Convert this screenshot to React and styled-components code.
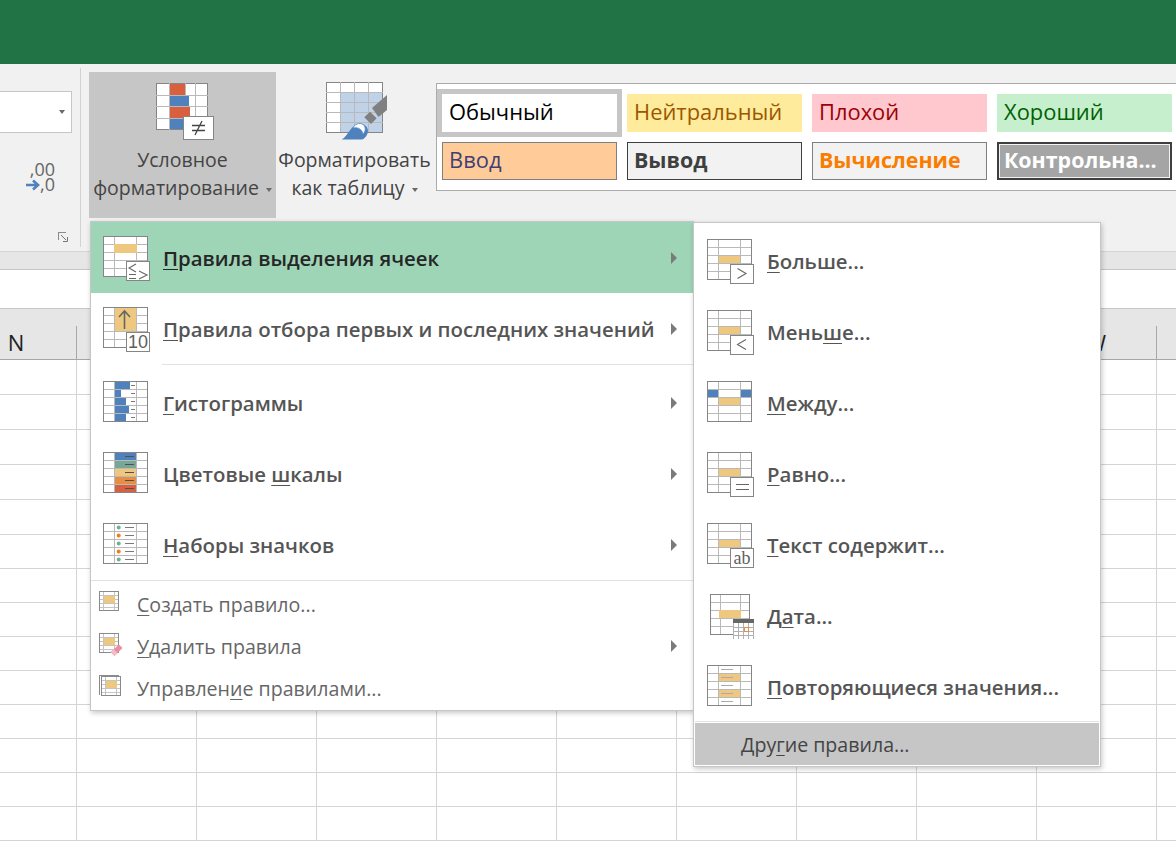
import React from 'react'
import styled, { createGlobalStyle } from 'styled-components'

const FONT = `"Open Sans", "Noto Sans", "Liberation Sans", sans-serif`
const ORANGE = '#edc87e'
const BLUE = '#4f81bd'
const RED = '#d9603f'
const EDGE = '#858585'
const LINE = '#b9b9b9'

const Global = createGlobalStyle`
  html, body { margin: 0; padding: 0; background: #fff; overflow: hidden; }
  #root { width: 1176px; height: 847px; overflow: hidden; }
  * { box-sizing: border-box; }
`

const Page = styled.div`
  position: relative;
  width: 1176px;
  height: 847px;
  overflow: hidden;
  font-family: ${FONT};
`
const TitleBar = styled.div`
  height: 64px;
  background: #217346;
`
const Ribbon = styled.div`
  display: flex;
  align-items: flex-start;
  height: 188px;
  background: #f1f1f1;
  border-bottom: 1px solid #d4d4d4;
`
const NumberGroup = styled.div`
  display: flex;
  flex-direction: column;
  align-items: flex-end;
  width: 81px;
  height: 179px;
  margin-top: 4px;
  padding: 23px 8px 4px 0;
  border-right: 1px solid #d2d2d2;
`
const Combo = styled.div`
  display: flex;
  align-items: center;
  justify-content: flex-end;
  width: 72px;
  height: 42px;
  padding-right: 6px;
  background: #fff;
  border: 1px solid #c6c6c6;
  border-left: 0;
`
const Caret = styled.span`
  display: inline-block;
  width: 0;
  height: 0;
  margin-left: ${p => p.$gap || 0}px;
  vertical-align: middle;
  border-left: 3.5px solid transparent;
  border-right: 3.5px solid transparent;
  border-top: 4px solid #6a6a6a;
`
const DecimalStep = styled.div`
  display: flex;
  flex-direction: column;
  align-items: flex-end;
  margin: 29px 17px 0 0;
  font-size: 18px;
  line-height: 15px;
  color: #666;
`
const DecimalLine = styled.div`
  display: flex;
  align-items: center;
`
const Launcher = styled.svg`
  display: block;
  margin-top: auto;
  margin-right: 3px;
`
const RibbonButton = styled.div`
  display: flex;
  flex-direction: column;
  align-items: center;
  flex: none;
  width: ${p => p.$w}px;
  height: 146px;
  margin: 8px 0 0 ${p => p.$ml}px;
  padding-top: ${p => p.$pt}px;
  background: ${p => (p.$active ? '#c6c6c6' : 'transparent')};
  color: #444;
  font-size: 19.5px;
  line-height: 28px;
  text-align: center;
  white-space: nowrap;
`
const ButtonIcon = styled.svg`
  display: block;
  flex: none;
  margin-left: ${p => p.$ml}px;
`
const ButtonLabel = styled.div`
  margin-top: ${p => p.$mt}px;
`
const Gallery = styled.div`
  display: grid;
  grid-template-columns: repeat(4, 175px);
  grid-auto-rows: 38px;
  gap: 10px;
  flex: 1;
  height: 108px;
  margin: 19px 0 0 3px;
  padding: 10px 0 0 5px;
  background: #fff;
  border: 1px solid #ababab;
  border-right: 0;
`
const StyleCell = styled.div`
  display: flex;
  align-items: center;
  padding: 0 0 3px ${p => p.$pl}px;
  font-size: ${p => (p.$bold ? 21.4 : 21.9)}px;
  font-weight: ${p => (p.$bold ? 700 : 400)};
  white-space: nowrap;
  color: ${p => p.$fg};
  background: ${p => p.$bg};
  border: ${p => p.$border || 'none'};
  ${p => p.$selected && 'box-shadow: 0 0 0 5px #c6c6c6;'}
  ${p => p.$double && 'outline: 1px solid #f2f2f2; outline-offset: -3px;'}
`
const Strip = styled.div`
  height: 18px;
  background: #e6e6e6;
  border-bottom: 1px solid #c6c6c6;
`
const FormulaBar = styled.div`
  height: 39px;
  background: #fff;
  border-bottom: 1px solid #c6c6c6;
`
const HeaderRow = styled.div`
  display: flex;
  height: 51px;
  margin-left: -43px;
  background: #e6e6e6;
  border-bottom: 1px solid #a6a6a6;
`
const HeaderCell = styled.div`
  flex: none;
  position: relative;
  width: 120px;
  padding: 17px 2px 0 0;
  font-size: 22px;
  line-height: 32px;
  text-align: center;
  color: #222;
  &::after {
    content: '';
    position: absolute;
    right: 0;
    top: 17px;
    bottom: 0;
    width: 1px;
    background: #a8a8a8;
  }
`
const SheetRow = styled.div`
  display: flex;
  height: ${p => p.$h}px;
  margin-left: -43px;
  border-bottom: 1px solid #d4d4d4;
`
const SheetCell = styled.div`
  flex: none;
  width: 120px;
  border-right: 1px solid #d4d4d4;
`

const Menu = styled.div`
  position: absolute;
  top: ${p => p.$top}px;
  left: ${p => p.$left}px;
  width: ${p => p.$w}px;
  padding: ${p => p.$pt}px 0 0;
  background: #fff;
  border: 1px solid #c6c6c6;
  box-shadow: 1px 2px 5px rgba(0, 0, 0, 0.22);
`
const MenuRow = styled.div`
  display: flex;
  align-items: center;
  height: 71px;
  padding: 0 0 ${p => p.$pb || 0}px ${p => p.$pl}px;
  font-size: 20.4px;
  font-weight: 600;
  white-space: nowrap;
  color: ${p => (p.$active ? '#262626' : '#555')};
  background: ${p => (p.$active ? '#9fd5b7' : 'transparent')};
`
const SmallRow = styled.div`
  display: flex;
  align-items: center;
  height: 42px;
  padding: 0 0 2px 8px;
  font-size: 19.6px;
  white-space: nowrap;
  color: #666;
`
const OtherRow = styled.div`
  display: flex;
  align-items: center;
  height: 42px;
  margin: 0 0 1px 1px;
  padding-left: 46px;
  width: 404px;
  font-size: 19.6px;
  color: #444;
  background: #c6c6c6;
`
const RowIcon = styled.svg`
  display: block;
  flex: none;
  margin: ${p => p.$mt || 0}px ${p => p.$gap}px ${p => p.$mb || 0}px 0;
  overflow: visible;
`
const Arrow = styled.span`
  width: 0;
  height: 0;
  margin-left: auto;
  margin-right: 16px;
  border-top: 6px solid transparent;
  border-bottom: 6px solid transparent;
  border-left: 6px solid #7a7a7a;
`
const InnerSep = styled.div`
  height: 1px;
  margin: ${p => p.$m};
  background: #e1e1e1;
`
const Key = styled.u`
  text-decoration-thickness: 1px;
  text-underline-offset: 3px;
`

function Grid({ w = 45, h = 41, cols = [11, 33], rows = [8, 16, 24, 32], x = 0 }) {
  return (
    <g shapeRendering="crispEdges">
      <rect x={x} y={0} width={w} height={h} fill="#fff" />
      {cols.map(c => (
        <line key={c} x1={x + c + 0.5} x2={x + c + 0.5} y1={0} y2={h} stroke={LINE} />
      ))}
      {rows.map(r => (
        <line key={r} x1={x} x2={x + w} y1={r + 0.5} y2={r + 0.5} stroke={LINE} />
      ))}
      <rect x={x + 0.5} y={0.5} width={w - 1} height={h - 1} fill="none" stroke={EDGE} />
    </g>
  )
}

function Badge({ children, x = 23, y = 25, w = 23, h = 19 }) {
  return (
    <g>
      <rect x={x + 0.5} y={y + 0.5} width={w} height={h} fill="#fff" stroke={EDGE} shapeRendering="crispEdges" />
      {children}
    </g>
  )
}

const Fill = ({ x = 12, y, w = 21, h = 7, c = ORANGE }) => (
  <rect x={x} y={y} width={w} height={h} fill={c} shapeRendering="crispEdges" />
)
const Dash = ({ x1, x2, y, c = '#7a7a7a' }) => (
  <line x1={x1} x2={x2} y1={y} y2={y} stroke={c} shapeRendering="crispEdges" />
)
const Stroke = ({ d, w = 1.1 }) => <path d={d} fill="none" stroke="#666" strokeWidth={w} />
const BadgeText = ({ x, y, size, serif, children }) => (
  <text
    x={x}
    y={y}
    fontSize={size}
    fontWeight="400"
    fill="#5f5f5f"
    textAnchor="middle"
    fontFamily={serif ? '"Liberation Serif", serif' : '"Liberation Sans", sans-serif'}
  >
    {children}
  </text>
)

const ROW_Y = [0, 8, 16, 24, 32]

const ICONS = {
  rules: (
    <>
      <Grid />
      <Fill x={11} y={8} w={23} h={9} />
      <Badge>
        <Stroke d="M33 28 L26 32 L33 36" />
        <Stroke d="M26 38.5 H33 M26 42.5 H33" />
        <Stroke d="M36 35 L44 39 L36 43" />
      </Badge>
    </>
  ),
  top: (
    <>
      <Grid />
      <Fill y={1} h={23} />
      <path d="M21.5 22 V4 M16 10 L21.5 4 L27 10" fill="none" stroke="#666" strokeWidth="1.6" />
      <Badge>
        <BadgeText x={35} y={41} size={18}>10</BadgeText>
      </Badge>
    </>
  ),
  bars: (
    <>
      <Grid />
      {[15, 6, 11, 14, 11].map((w, i) => (
        <React.Fragment key={i}>
          <Fill y={ROW_Y[i] + 1} w={w} h={7} c={BLUE} />
          <Dash x1={28} x2={32} y={ROW_Y[i] + 4.5} />
        </React.Fragment>
      ))}
    </>
  ),
  scale: (
    <>
      <Grid />
      {[BLUE, '#76a797', ORANGE, '#e58e44', RED].map((c, i) => (
        <React.Fragment key={i}>
          <Fill y={ROW_Y[i] + 1} h={7} c={c} />
          <Dash x1={22} x2={31} y={ROW_Y[i] + 4.5} c="#505050" />
        </React.Fragment>
      ))}
    </>
  ),
  sets: (
    <>
      <Grid />
      {['#6fb098', '#f07f1c', '#6fb098', '#f07f1c', '#6fb098'].map((c, i) => (
        <React.Fragment key={i}>
          <circle cx={15.7} cy={ROW_Y[i] + 4.5} r={2} fill={c} />
          <Dash x1={22} x2={31} y={ROW_Y[i] + 4.5} />
        </React.Fragment>
      ))}
    </>
  ),
  gt: (
    <>
      <Grid />
      <Fill y={17} />
      <Badge>
        <Stroke d="M30.5 29.5 L39 34.5 L30.5 39.5" />
      </Badge>
    </>
  ),
  lt: (
    <>
      <Grid />
      <Fill y={17} />
      <Badge>
        <Stroke d="M39 29.5 L30.5 34.5 L39 39.5" />
      </Badge>
    </>
  ),
  between: (
    <>
      <Grid />
      <Fill x={1} y={9} w={10} c={BLUE} />
      <Fill x={34} y={9} w={10} c={BLUE} />
      <Fill y={17} />
    </>
  ),
  eq: (
    <>
      <Grid />
      <Fill y={17} />
      <Badge>
        <Stroke d="M29 32.5 H42 M29 37.5 H42" />
      </Badge>
    </>
  ),
  text: (
    <>
      <Grid />
      <Fill y={17} />
      <Badge>
        <BadgeText x={35} y={41} size={18} serif>ab</BadgeText>
      </Badge>
    </>
  ),
  date: (
    <>
      <Grid x={3} w={40} cols={[10, 30]} />
      <Fill x={12} y={16} w={22} h={8} />
      <g shapeRendering="crispEdges">
        <rect x={26} y={25} width={21} height={20} fill="#fff" />
        <rect x={26} y={25} width={21} height={4} fill="#666" />
        <path d="M26.5 29 V45 M31.5 29 V45 M36.5 29 V45 M41.5 29 V45 M46.5 29 V45 M26 33.5 H47 M26 37.5 H47 M26 41.5 H47" stroke="#b0b0b0" />
        <rect x={37.5} y={33.5} width={4} height={4} fill="#fff" stroke="#e58e44" />
      </g>
    </>
  ),
  dup: (
    <>
      <Grid />
      <Fill y={9} />
      <Fill y={25} />
      {ROW_Y.map(y => (
        <Dash key={y} x1={14} x2={26} y={y + 4.5} c="#aaa" />
      ))}
    </>
  ),
}

function SmallGrid({ x = 0, y = 0 }) {
  return (
    <g shapeRendering="crispEdges" transform={`translate(${x} ${y})`}>
      <path d="M4.5 0 V20 M15.5 0 V20 M0 4.5 H20 M0 8.5 H20 M0 12.5 H20 M0 16.5 H20" stroke="#c4c4c4" />
      <rect x={0.5} y={0.5} width={19} height={19} fill="none" stroke="#8a8a8a" />
      <rect x={5} y={5} width={10.5} height={6.5} fill={ORANGE} />
    </g>
  )
}

const Rule = ({ icon, mt, gap = 12 }) => (
  <RowIcon width="48" height="46" viewBox="0 0 48 46" $mt={mt} $gap={gap}>
    {ICONS[icon]}
  </RowIcon>
)

const Label = ({ t }) => (
  <span>
    {t[0]}
    <Key>{t[1]}</Key>
    {t[2]}
  </span>
)

const MAIN_TOP = [
  { icon: 'rules', t: ['', 'П', 'равила выделения ячеек'], active: true },
  { icon: 'top', t: ['', 'П', 'равила отбора первых и последних значений'] },
]
const MAIN_MID = [
  { icon: 'bars', t: ['', 'Г', 'истограммы'] },
  { icon: 'scale', t: ['Цветовые ', 'ш', 'калы'] },
  { icon: 'sets', t: ['', 'Н', 'аборы значков'] },
]
const SUB = [
  { icon: 'gt', t: ['', 'Б', 'ольше...'] },
  { icon: 'lt', t: ['Мень', 'ш', 'е...'] },
  { icon: 'between', t: ['', 'М', 'ежду...'] },
  { icon: 'eq', t: ['', 'Р', 'авно...'] },
  { icon: 'text', t: ['', 'Т', 'екст содержит...'] },
  { icon: 'date', t: ['Д', 'а', 'та...'] },
  { icon: 'dup', t: ['', 'П', 'овторяющиеся значения...'] },
]
const STYLES = [
  { name: 'Обычный', fg: '#000', bg: '#fff', selected: true, pl: 7 },
  { name: 'Нейтральный', fg: '#9c5700', bg: '#ffeb9c', pl: 7 },
  { name: 'Плохой', fg: '#9c0006', bg: '#ffc7ce', pl: 7 },
  { name: 'Хороший', fg: '#006100', bg: '#c6efce', pl: 7 },
  { name: 'Ввод', fg: '#3f3f76', bg: '#ffcc99', border: '1px solid #7f7f7f', pl: 6 },
  { name: 'Вывод', fg: '#3f3f3f', bg: '#f2f2f2', border: '1px solid #3f3f3f', bold: true, pl: 6 },
  { name: 'Вычисление', fg: '#fa7d00', bg: '#f2f2f2', border: '1px solid #7f7f7f', bold: true, pl: 6 },
  { name: 'Контрольна...', fg: '#fff', bg: '#a5a5a5', border: '2px solid #3f3f3f', bold: true, double: true, pl: 5 },
]
// the columns between N and W sit behind the open menus, their letters are never seen
const COLUMNS = ['N', '', '', '', '', '', '', '', '', 'W']
const ROW_HEIGHTS = [35, 35, 35, 35, 35, 34, 34, 34, 34, 34, 34, 34, 34, 34]

export default function App() {
  return (
    <Page>
      <Global />
      <TitleBar />
      <Ribbon>
        <NumberGroup>
          <Combo>
            <Caret />
          </Combo>
          <DecimalStep>
            <DecimalLine>,00</DecimalLine>
            <DecimalLine>
              <svg width="14" height="12" viewBox="0 0 14 12">
                <path d="M0 6 H11 M7 1.5 L12 6 L7 10.5" fill="none" stroke={BLUE} strokeWidth="2.6" />
              </svg>
              ,0
            </DecimalLine>
          </DecimalStep>
          <Launcher width="11" height="11" viewBox="0 0 11 11">
            <path d="M0.5 8 V0.5 H8" fill="none" stroke="#8a8a8a" shapeRendering="crispEdges" />
            <path d="M3 3 L8 8 M9.5 5 V9.5 H5" fill="none" stroke="#777" />
          </Launcher>
        </NumberGroup>
        <RibbonButton $w={187} $ml={8} $pt={11} $active>
          <ButtonIcon width="58" height="57" viewBox="0 0 58 57" $ml={5}>
            <g shapeRendering="crispEdges">
              <rect x={0.5} y={0.5} width={51} height={46} fill="#fff" stroke={EDGE} />
              <path d="M13.5 0 V47 M29.5 0 V47 M39.5 0 V47 M0 12.5 H52 M0 23.5 H52 M0 35.5 H52" stroke={LINE} />
              <rect x={14} y={1} width={15} height={11} fill={RED} />
              <rect x={14} y={13} width={19} height={10} fill={BLUE} />
              <rect x={14} y={24} width={20} height={11} fill={RED} />
              <rect x={14} y={36} width={14} height={10} fill={BLUE} />
              <rect x={27.5} y={33.5} width={30} height={23} fill="#fff" stroke={EDGE} />
            </g>
            <path d="M36 42.5 H49 M36 47.5 H49 M46 38 L39 52" fill="none" stroke="#444" strokeWidth="1.3" />
          </ButtonIcon>
          <ButtonLabel $mt={6}>
            Условное
            <br />
            форматирование
            <Caret $gap={7} />
          </ButtonLabel>
        </RibbonButton>
        <RibbonButton $w={157} $ml={0} $pt={10}>
          <ButtonIcon width="62" height="58" viewBox="0 0 62 58" $ml={4}>
            <g shapeRendering="crispEdges">
              <rect x={0.5} y={0.5} width={56} height={50} fill="#fff" stroke={EDGE} />
              <rect x={15} y={10} width={41} height={40} fill="#c0d2e8" />
              <path d="M14.5 0 V50 M28.5 0 V50 M42.5 0 V50 M0 10.5 H57 M0 20.5 H57 M0 30.5 H57 M0 40.5 H57" stroke={LINE} />
            </g>
            <path d="M61 13 L46 26 L52.5 35 L61 28 Z" fill="#808080" />
            <path d="M44 29.7 L50.7 36.3 L45 42 L38.3 35.3 Z" fill="#808080" />
            <path d="M15.7 57.5 C22 54 24 45 31 42 C36 40 42 44 42 49 C42 53 38 57.5 36 57.5 Z" fill={BLUE} />
            <path d="M27 46 C29 41 36 40 38.5 44 C40 47 39 50 37 52 C36 47 32 45 27 46 Z" fill="#fff" stroke="#5b93cf" strokeWidth="0.8" />
          </ButtonIcon>
          <ButtonLabel $mt={6}>
            Форматировать
            <br />
            как таблицу
            <Caret $gap={7} />
          </ButtonLabel>
        </RibbonButton>
        <Gallery>
          {STYLES.map(s => (
            <StyleCell
              key={s.name}
              $fg={s.fg}
              $bg={s.bg}
              $border={s.border}
              $bold={s.bold}
              $selected={s.selected}
              $double={s.double}
              $pl={s.pl}
            >
              {s.name}
            </StyleCell>
          ))}
        </Gallery>
      </Ribbon>
      <Strip />
      <FormulaBar />
      <HeaderRow>
        {COLUMNS.map((c, i) => (
          <HeaderCell key={i}>{c}</HeaderCell>
        ))}
      </HeaderRow>
      {ROW_HEIGHTS.map((h, i) => (
        <SheetRow key={i} $h={h}>
          {COLUMNS.map((c, j) => (
            <SheetCell key={j} />
          ))}
        </SheetRow>
      ))}

      <Menu $top={221} $left={90} $w={604} $pt={0}>
        {MAIN_TOP.map(m => (
          <MenuRow key={m.icon} $active={m.active} $pl={12}>
            <Rule icon={m.icon} mt={3} />
            <Label t={m.t} />
            <Arrow />
          </MenuRow>
        ))}
        <InnerSep $m="0 0 2px 71px" />
        {MAIN_MID.map(m => (
          <MenuRow key={m.icon} $pl={12}>
            <Rule icon={m.icon} mt={3} />
            <Label t={m.t} />
            <Arrow />
          </MenuRow>
        ))}
        <InnerSep $m="0 0 3px 0" />
        <SmallRow>
          <RowIcon width="29" height="20" viewBox="0 0 29 20" $gap={9} $mb={6}>
            <SmallGrid />
          </RowIcon>
          <Label t={['', 'С', 'оздать правило...']} />
        </SmallRow>
        <SmallRow>
          <RowIcon width="29" height="20" viewBox="0 0 29 20" $gap={9} $mb={6}>
            <SmallGrid />
            <path d="M11.5 19 L20 11.5 L23.5 15 L15.5 23 Z" fill="#e98ea0" />
            <path d="M11.5 19 L14.5 16 L18.5 20 L15.5 23 Z" fill="#f3bcc7" />
          </RowIcon>
          <Label t={['', 'У', 'далить правила']} />
          <Arrow />
        </SmallRow>
        <SmallRow>
          <RowIcon width="29" height="21" viewBox="0 0 29 21" $gap={9} $mb={6}>
            <path d="M0.5 20 V0.5 H20" fill="none" stroke="#8a8a8a" shapeRendering="crispEdges" />
            <SmallGrid x={2} y={1} />
          </RowIcon>
          <Label t={['Управлен', 'и', 'е правилами...']} />
        </SmallRow>
      </Menu>

      <Menu $top={222} $left={693} $w={408} $pt={3}>
        {SUB.map(m => (
          <MenuRow key={m.icon} $pb={2} $pl={13}>
            <Rule icon={m.icon} mt={2} />
            <Label t={m.t} />
          </MenuRow>
        ))}
        <InnerSep $m="-2px 1px 1px" />
        <OtherRow>
          <Label t={['Дру', 'г', 'ие правила...']} />
        </OtherRow>
      </Menu>
    </Page>
  )
}
